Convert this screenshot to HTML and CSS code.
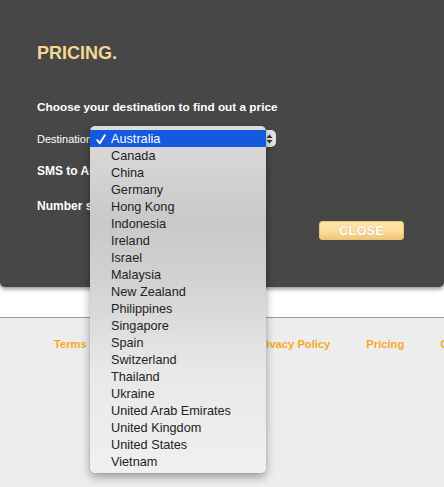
FILE: index.html
```html
<!DOCTYPE html>
<html>
<head>
<meta charset="utf-8">
<link rel="stylesheet" href="styles.css">
</head>
<body>
<div class="panel">
  <h1 class="title">PRICING.</h1>
  <p class="lead">Choose your destination to find out a price</p>
  <div class="dest-row">
    <span class="dest-label">Destination</span>
    <div class="select">
      <svg class="stepper" width="9" height="12" viewBox="0 0 9 12"><path d="M1.5 5 L4.5 1.5 L7.5 5 Z M1.5 7 L4.5 10.5 L7.5 7 Z" fill="#333"/></svg>
    </div>
  </div>
  <p class="info sms">SMS to Australia</p>
  <p class="info number">Number s</p>
  <div class="actions"><button class="close">CLOSE</button></div>
</div>
<div class="band"></div>
<div class="footer">
  <a class="flink">Terms &amp; Conditions</a>
  <a class="flink">FAQ</a>
  <a class="flink">Privacy Policy</a>
  <a class="flink">Pricing</a>
  <a class="flink">Contact</a>
</div>
<ul class="menu">
  <li class="item selected"><svg class="check" width="10" height="11" viewBox="0 0 10 11"><path d="M1.3 6.2 L3.8 9.3 L8.8 1.2" fill="none" stroke="#fff" stroke-width="1.9" stroke-linecap="round" stroke-linejoin="round"/></svg>Australia</li>
  <li class="item">Canada</li>
  <li class="item">China</li>
  <li class="item">Germany</li>
  <li class="item">Hong Kong</li>
  <li class="item">Indonesia</li>
  <li class="item">Ireland</li>
  <li class="item">Israel</li>
  <li class="item">Malaysia</li>
  <li class="item">New Zealand</li>
  <li class="item">Philippines</li>
  <li class="item">Singapore</li>
  <li class="item">Spain</li>
  <li class="item">Switzerland</li>
  <li class="item">Thailand</li>
  <li class="item">Ukraine</li>
  <li class="item">United Arab Emirates</li>
  <li class="item">United Kingdom</li>
  <li class="item">United States</li>
  <li class="item">Vietnam</li>
</ul>
</body>
</html>
```
FILE: styles.css
```css
html, body {
  margin: 0;
  padding: 0;
  background: #ededed;
  font-family: "Liberation Sans", Arial, sans-serif;
  overflow: hidden;
  width: 444px;
  height: 487px;
}
.panel {
  position: relative;
  z-index: 1;
  height: 287px;
  box-sizing: border-box;
  background: #474747;
  border-radius: 0 0 5px 5px;
  box-shadow: 0 2px 4px rgba(0,0,0,0.45);
  padding: 43px 0 0 37px;
  color: #fff;
}
.title {
  margin: 0;
  font-size: 18px;
  line-height: 20px;
  font-weight: bold;
  color: #f6d98f;
}
.lead {
  margin: 37px 0 0;
  font-size: 11.8px;
  line-height: 14px;
  font-weight: bold;
}
.dest-row {
  margin-top: 16px;
  display: flex;
  align-items: center;
  height: 17px;
}
.dest-label {
  font-size: 11px;
  width: 53px;
  white-space: nowrap;
}
.select {
  width: 186px;
  height: 17px;
  background: #e4e4e4;
  border-radius: 5px;
  display: flex;
  align-items: center;
  justify-content: flex-end;
  padding-right: 2px;
  box-sizing: border-box;
}
.stepper { display: block; }
.info {
  margin: 0;
  font-size: 12px;
  line-height: 14px;
  font-weight: bold;
  white-space: nowrap;
}
.sms { margin-top: 17px; }
.number { margin-top: 21px; }
.actions {
  display: flex;
  justify-content: flex-end;
  padding-right: 40px;
  margin-top: 8px;
}
.close {
  width: 85px;
  height: 19px;
  border: 1px solid #e8c47a;
  border-radius: 3px;
  background: linear-gradient(#ffe5a6, #fcdc99 55%, #efc67a);
  color: #fff;
  font-family: "Liberation Sans", Arial, sans-serif;
  font-weight: bold;
  font-size: 13px;
  line-height: 17px;
  padding: 0;
  text-shadow: 0 0 1px rgba(190,140,50,0.8);
}
.band {
  height: 30px;
  background: #fff;
  border-bottom: 1px solid #9a9a9a;
}
.footer {
  display: flex;
  gap: 36px;
  padding: 20px 0 0 54px;
  white-space: nowrap;
  overflow: hidden;
}
.flink {
  font-size: 11.2px;
  line-height: 13px;
  font-weight: bold;
  color: #f7a823;
}
.menu {
  position: absolute;
  z-index: 5;
  left: 90px;
  top: 126px;
  width: 176px;
  height: 347px;
  box-sizing: border-box;
  margin: 0;
  padding: 4px 0 0;
  list-style: none;
  border-radius: 5px;
  background: linear-gradient(#dcdcdc 0%, #c9c9c9 28%, #d2d2d2 45%, #e8e8e8 70%, #f0f0f0 100%);
  box-shadow: 0 4px 10px rgba(0,0,0,0.35), 0 0 1px rgba(0,0,0,0.3);
}
.item {
  position: relative;
  height: 17px;
  line-height: 19px;
  overflow: hidden;
  padding-left: 21px;
  font-size: 12.7px;
  color: #222;
  white-space: nowrap;
}
.selected {
  background: #135ade;
  color: #fff;
}
.check {
  position: absolute;
  left: 6px;
  top: 4px;
}
```
